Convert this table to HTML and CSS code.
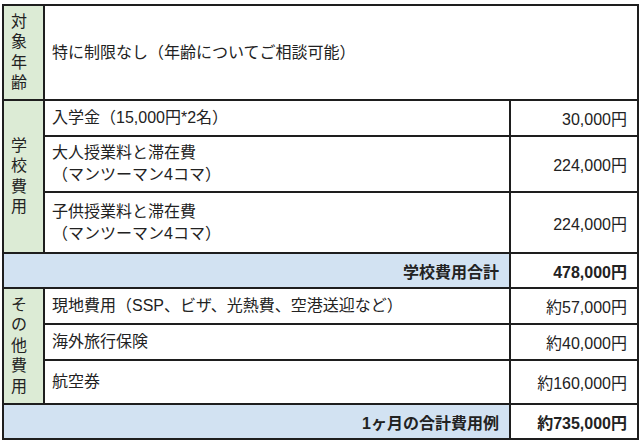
FILE: index.html
```html
<!DOCTYPE html>
<html lang="ja">
<head>
<meta charset="utf-8">
<title>費用</title>
<link rel="stylesheet" href="styles.css">
</head>
<body>
<table class="fees">
  <colgroup>
    <col class="c-label">
    <col class="c-item">
    <col class="c-price">
  </colgroup>
  <tbody>
    <tr class="r-age">
      <th class="label"><span class="vert">対象年齢</span></th>
      <td class="item" colspan="2">特に制限なし（年齢についてご相談可能）</td>
    </tr>
    <tr class="r-36">
      <th class="label" rowspan="3"><span class="vert">学校費用</span></th>
      <td class="item">入学金（15,000円*2名）</td>
      <td class="price">30,000円</td>
    </tr>
    <tr class="r-56">
      <td class="item">大人授業料と滞在費<br>（マンツーマン4コマ）</td>
      <td class="price">224,000円</td>
    </tr>
    <tr class="r-61">
      <td class="item">子供授業料と滞在費<br>（マンツーマン4コマ）</td>
      <td class="price">224,000円</td>
    </tr>
    <tr class="r-35 total">
      <td class="sum-label" colspan="2">学校費用合計</td>
      <td class="price strong">478,000円</td>
    </tr>
    <tr class="r-36">
      <th class="label" rowspan="3"><span class="vert">その他費用</span></th>
      <td class="item">現地費用（SSP、ビザ、光熱費、空港送迎など）</td>
      <td class="price">約57,000円</td>
    </tr>
    <tr class="r-36">
      <td class="item">海外旅行保険</td>
      <td class="price">約40,000円</td>
    </tr>
    <tr class="r-44">
      <td class="item">航空券</td>
      <td class="price">約160,000円</td>
    </tr>
    <tr class="r-35 total">
      <td class="sum-label" colspan="2">1ヶ月の合計費用例</td>
      <td class="price strong">約735,000円</td>
    </tr>
  </tbody>
</table>
</body>
</html>
```
FILE: styles.css
```css
html, body {
  margin: 0;
  padding: 0;
  background: #ffffff;
}

body {
  padding: 4px 0 0 2px;
  font-family: "Liberation Sans", "Noto Sans CJK JP", sans-serif;
  font-size: 16px;
  color: #222222;
}

.fees {
  border-collapse: collapse;
  table-layout: fixed;
  width: 635px;
}

.c-label { width: 41px; }
.c-item { width: 466px; }
.c-price { width: 128px; }

.fees th,
.fees td {
  border: 2px solid #1e1e1e;
  padding: 0;
  vertical-align: middle;
  font-weight: normal;
}

.r-age { height: 95px; }
.r-36 { height: 36px; }
.r-56 { height: 56px; }
.r-61 { height: 61px; }
.r-35 { height: 35px; }
.r-44 { height: 44px; }

.fees .label {
  background: #dcebd5;
  text-align: left;
  padding-left: 7px;
}

.vert {
  display: block;
  width: 1em;
  line-height: 20.5px;
  word-break: break-all;
}

.fees .item {
  padding: 0 7px;
  line-height: 22px;
  text-align: left;
}

.fees .price {
  padding: 0 10px;
  text-align: right;
  white-space: nowrap;
}

.fees .sum-label {
  background: #d2e2f2;
  text-align: right;
  padding-right: 10px;
  font-weight: bold;
}

.fees .strong {
  font-weight: bold;
}
```
